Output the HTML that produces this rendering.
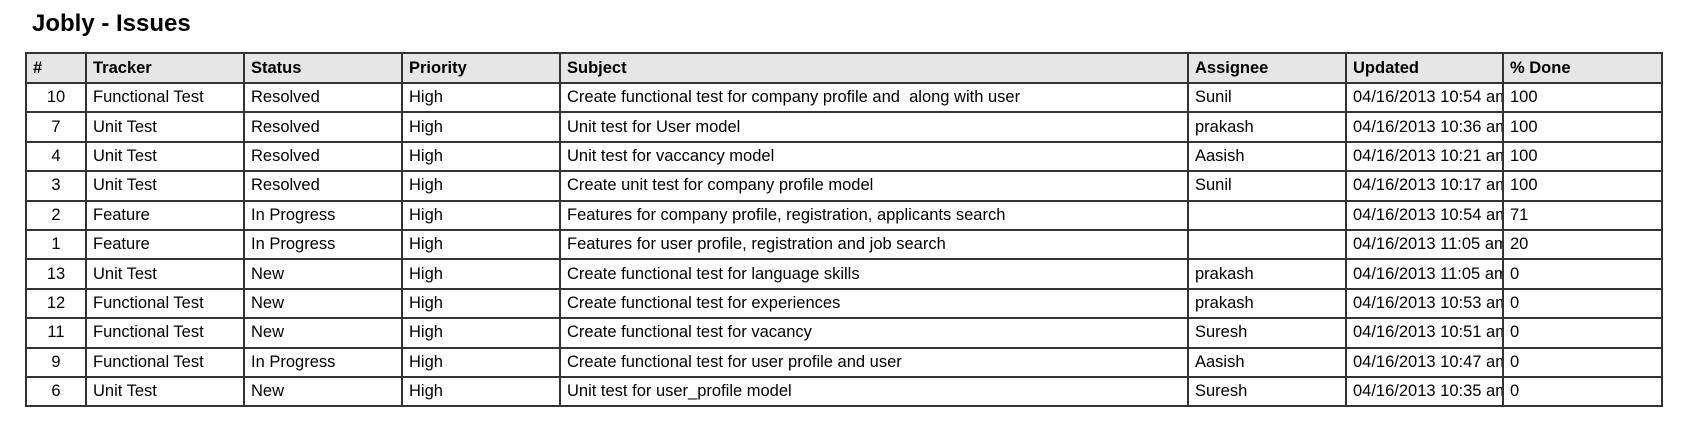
<!DOCTYPE html>
<html><head><meta charset="utf-8"><style>
body{margin:0;background:#fff;font-family:"Liberation Sans",Arial,sans-serif;color:#000;}
h1{position:absolute;left:32px;top:10px;margin:0;font-size:24px;font-weight:bold;}
table{position:absolute;left:25px;top:52px;border-collapse:collapse;table-layout:fixed;width:1636px;font-size:16.5px;}
td,th{border:2px solid #333;height:27.4px;padding:0 6px;white-space:nowrap;overflow:hidden;text-align:left;}
th{background:#e6e6e6;font-weight:bold;height:28px;}
td.n{text-align:center;}
td.u{padding-right:0;text-overflow:clip;}
</style></head><body>
<h1>Jobly - Issues</h1>
<table>
<colgroup><col style="width:60px"><col style="width:158px"><col style="width:158px"><col style="width:158px"><col style="width:628px"><col style="width:158px"><col style="width:157px"><col style="width:159px"></colgroup>
<tr><th>#</th><th>Tracker</th><th>Status</th><th>Priority</th><th>Subject</th><th>Assignee</th><th>Updated</th><th>% Done</th></tr>
<tr><td class="n">10</td><td>Functional Test</td><td>Resolved</td><td>High</td><td>Create functional test for company profile and &nbsp;along with user</td><td>Sunil</td><td class="u">04/16/2013 10:54 am</td><td>100</td></tr>
<tr><td class="n">7</td><td>Unit Test</td><td>Resolved</td><td>High</td><td>Unit test for User model</td><td>prakash</td><td class="u">04/16/2013 10:36 am</td><td>100</td></tr>
<tr><td class="n">4</td><td>Unit Test</td><td>Resolved</td><td>High</td><td>Unit test for vaccancy model</td><td>Aasish</td><td class="u">04/16/2013 10:21 am</td><td>100</td></tr>
<tr><td class="n">3</td><td>Unit Test</td><td>Resolved</td><td>High</td><td>Create unit test for company profile model</td><td>Sunil</td><td class="u">04/16/2013 10:17 am</td><td>100</td></tr>
<tr><td class="n">2</td><td>Feature</td><td>In Progress</td><td>High</td><td>Features for company profile, registration, applicants search</td><td></td><td class="u">04/16/2013 10:54 am</td><td>71</td></tr>
<tr><td class="n">1</td><td>Feature</td><td>In Progress</td><td>High</td><td>Features for user profile, registration and job search</td><td></td><td class="u">04/16/2013 11:05 am</td><td>20</td></tr>
<tr><td class="n">13</td><td>Unit Test</td><td>New</td><td>High</td><td>Create functional test for language skills</td><td>prakash</td><td class="u">04/16/2013 11:05 am</td><td>0</td></tr>
<tr><td class="n">12</td><td>Functional Test</td><td>New</td><td>High</td><td>Create functional test for experiences</td><td>prakash</td><td class="u">04/16/2013 10:53 am</td><td>0</td></tr>
<tr><td class="n">11</td><td>Functional Test</td><td>New</td><td>High</td><td>Create functional test for vacancy</td><td>Suresh</td><td class="u">04/16/2013 10:51 am</td><td>0</td></tr>
<tr><td class="n">9</td><td>Functional Test</td><td>In Progress</td><td>High</td><td>Create functional test for user profile and user</td><td>Aasish</td><td class="u">04/16/2013 10:47 am</td><td>0</td></tr>
<tr><td class="n">6</td><td>Unit Test</td><td>New</td><td>High</td><td>Unit test for user_profile model</td><td>Suresh</td><td class="u">04/16/2013 10:35 am</td><td>0</td></tr>
</table>
</body></html>
